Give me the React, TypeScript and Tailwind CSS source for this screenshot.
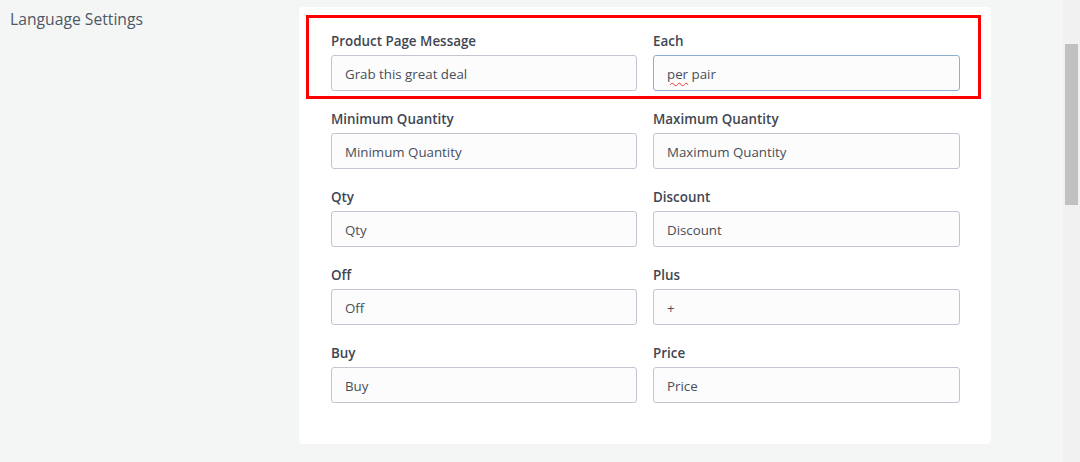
import React from "react";

const rows: [string, string, string, string][] = [
  ["Product Page Message", "Grab this great deal", "Each", "per pair"],
  ["Minimum Quantity", "Minimum Quantity", "Maximum Quantity", "Maximum Quantity"],
  ["Qty", "Qty", "Discount", "Discount"],
  ["Off", "Off", "Plus", "+"],
  ["Buy", "Buy", "Price", "Price"],
];

function Field({ label, value, focused }: { label: string; value: string; focused?: boolean }) {
  return (
    <div className="flex flex-col">
      <div className="h-[20px] leading-[20px] text-[13.4px] font-semibold text-[#3f4652]">{label}</div>
      <div
        className={
          "mt-[4px] h-[36px] rounded-[3px] border bg-[#fcfcfc] px-[13px] flex items-center text-[13.3px] leading-[20px] pt-[1px] text-[#474f5a] " +
          (focused ? "border-[#8db0d8]" : "border-[#c5c5d2]")
        }
      >
        {value === "per pair" ? (
          <span>
            <span className="underline decoration-wavy decoration-[#e33] decoration-[1px] underline-offset-[3px]">per</span> pair
          </span>
        ) : (
          value
        )}
      </div>
    </div>
  );
}

export default function App() {
  return (
    <div
      className="flex h-[462px] w-[1080px] bg-[#f4f6f6] overflow-hidden"
      style={{ fontFamily: '"Open Sans", "Noto Sans", sans-serif' }}
    >
      <div className="w-[299px] pl-[10px] pt-[8px]">
        <div className="text-[15.7px] leading-[22px] text-[#4d5866]">Language Settings</div>
      </div>
      <div className="pt-[7px]">
        <div className="relative w-[692px] h-[437px] rounded-[4px] bg-white pt-[24px] pl-[32px] pr-[31px]">
          <div className="grid grid-cols-[306px_307px] gap-x-[16px] gap-y-[18px]">
            {rows.map((r, i) => (
              <React.Fragment key={i}>
                <Field label={r[0]} value={r[1]} />
                <Field label={r[2]} value={r[3]} focused={i === 0} />
              </React.Fragment>
            ))}
          </div>
          <div className="absolute left-[7px] top-[8px] w-[675px] h-[84px] border-[3px] border-[#ff0000]" />
        </div>
      </div>
      <div className="flex-1" />
      <div className="w-[17px] bg-[#f1f1f1] pt-[44px] flex justify-center">
        <div className="w-[13px] h-[161px] bg-[#c1c1c1]" />
      </div>
    </div>
  );
}
